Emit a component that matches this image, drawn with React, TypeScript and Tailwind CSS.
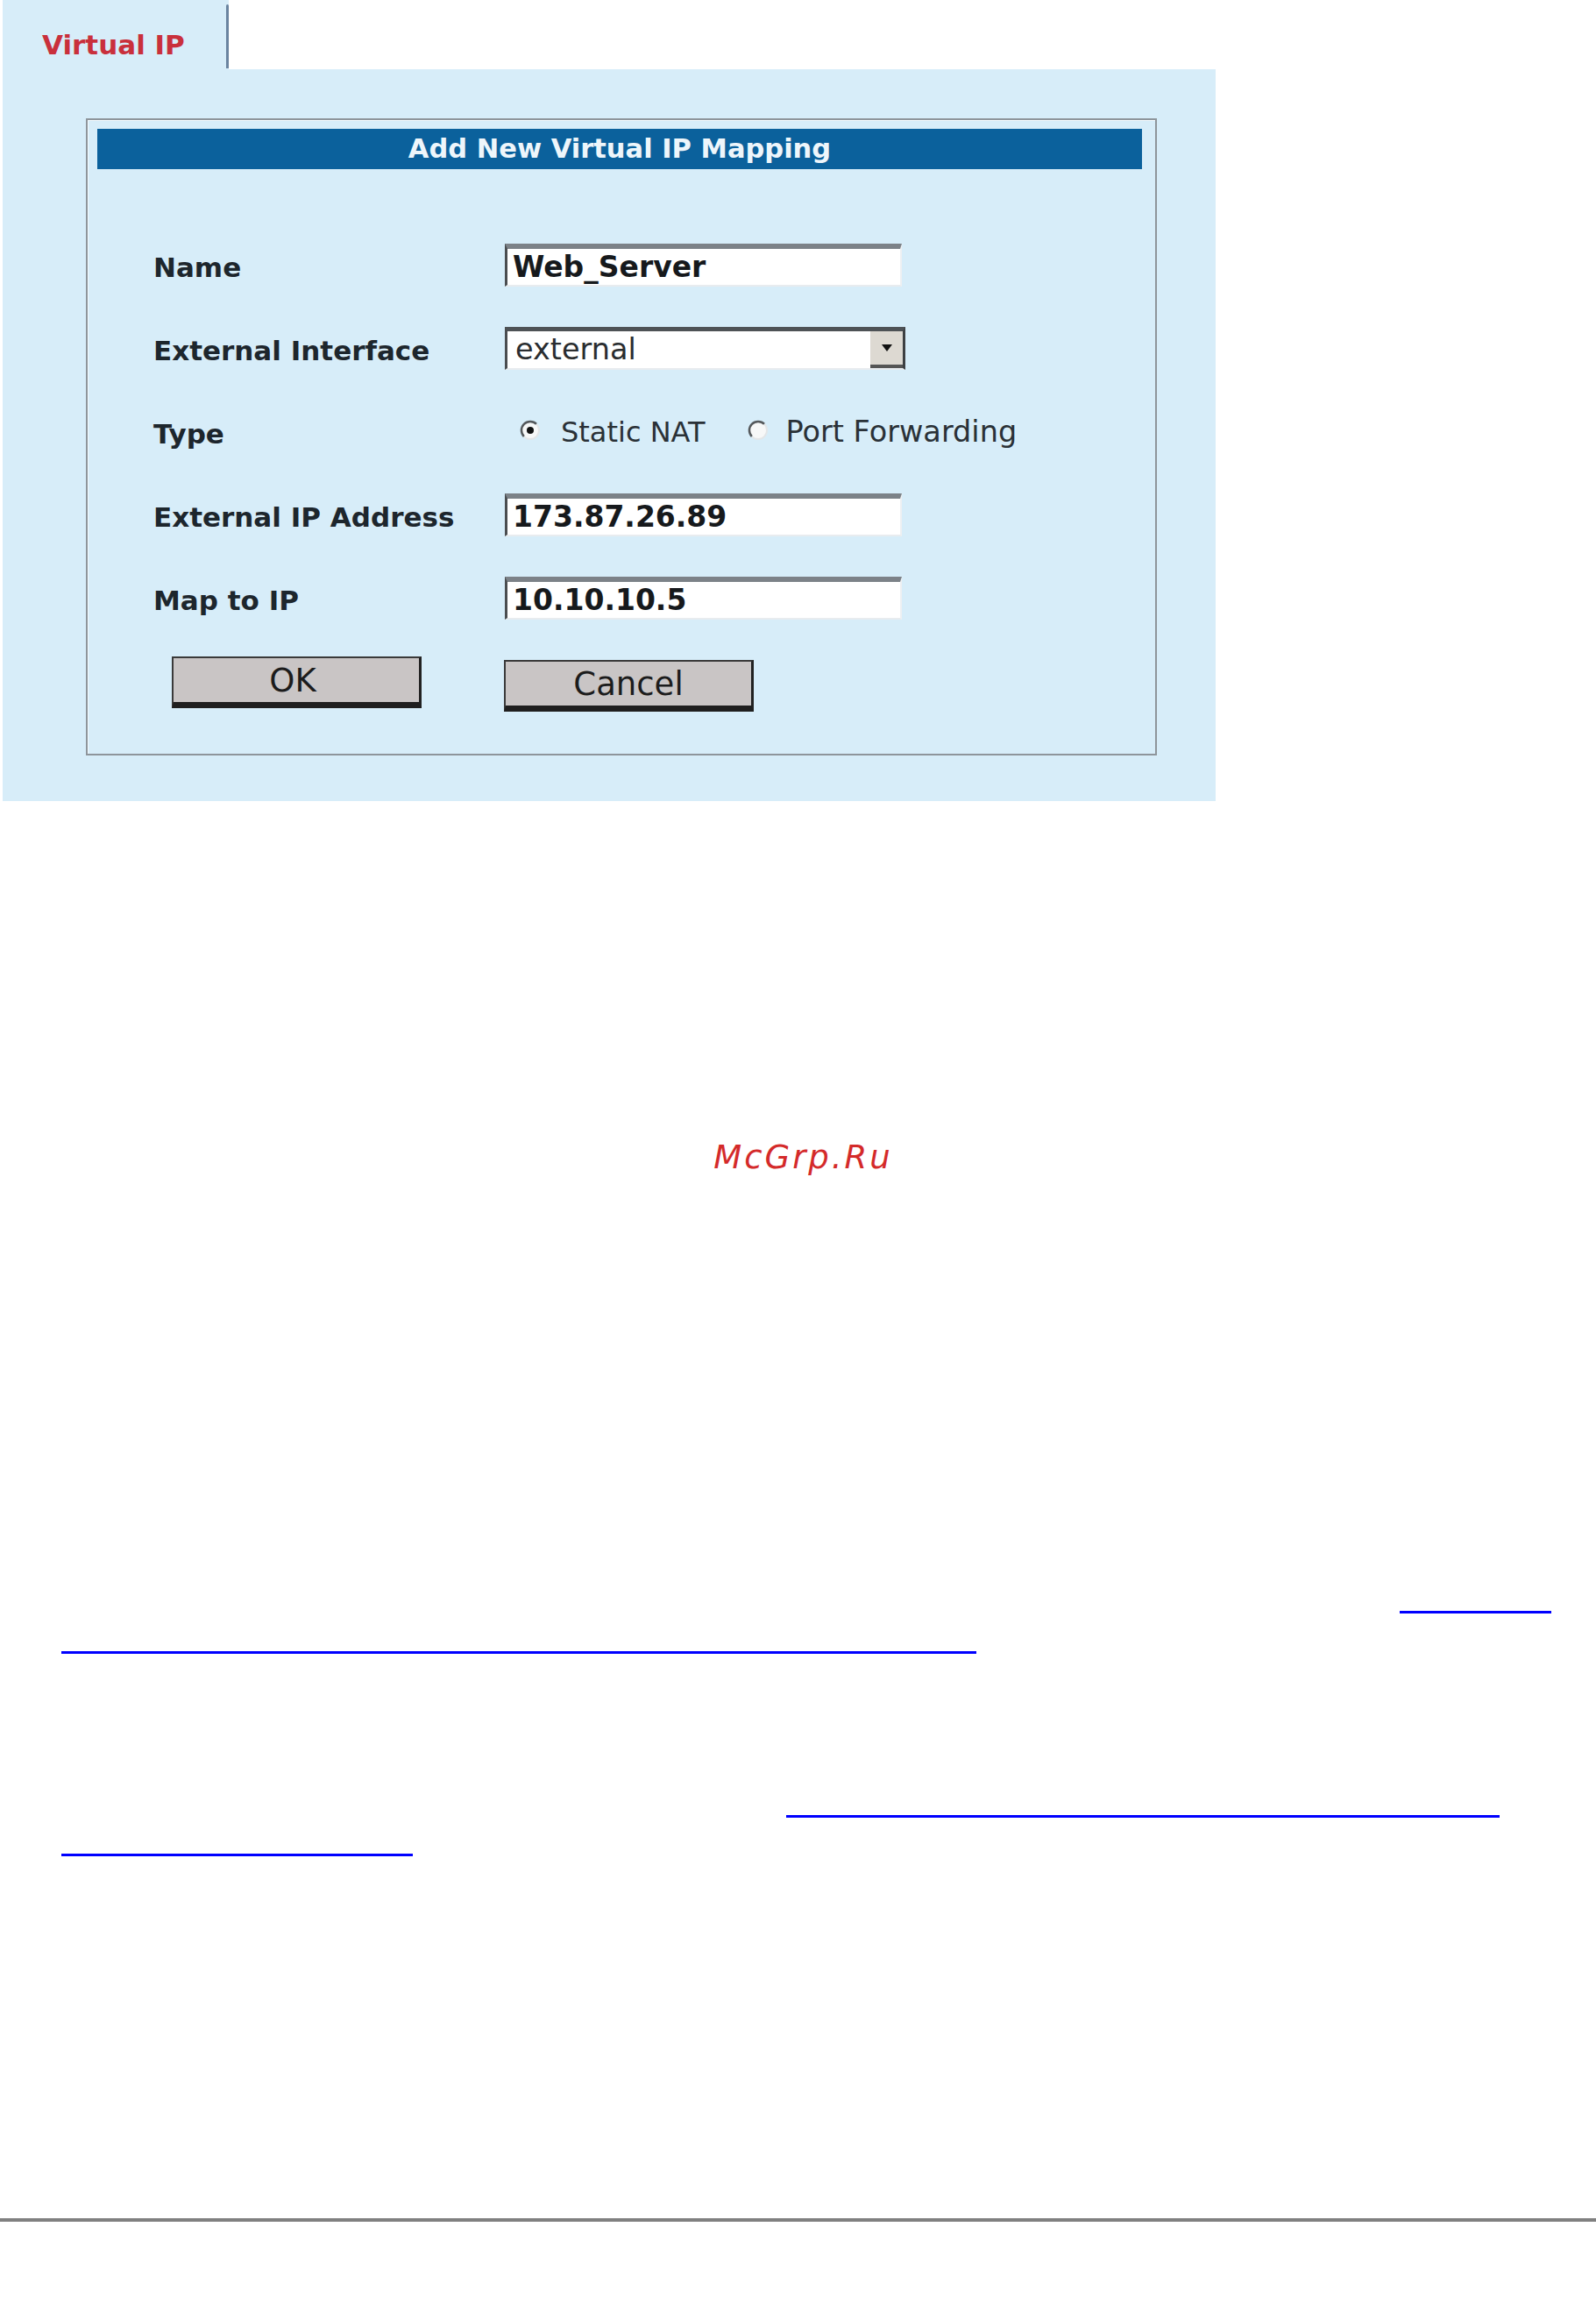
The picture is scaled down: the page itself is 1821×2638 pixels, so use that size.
import React from "react";

const bold = "font-['DejaVu_Sans',sans-serif] font-bold";
const reg = "font-['DejaVu_Sans',sans-serif]";

function TextBox({ value }: { value: string }) {
  return (
    <div className="w-[453px] h-[49px] bg-white border-t-[6px] border-t-[#7c8288] border-l-[3px] border-l-[#4a4d50] border-r-[2px] border-r-[#eef0f2] border-b-[2px] border-b-[#e8ecef] flex items-center pl-[6px]">
      <span className={`${bold} text-[33px] leading-none text-[#16191c]`}>{value}</span>
    </div>
  );
}

function Radio({ checked }: { checked: boolean }) {
  return (
    <svg width="26" height="26" viewBox="0 0 26 26" className="shrink-0">
      <circle cx="13" cy="13" r="10" fill="#f7f8f8" />
      <path d="M5.9 20.1 A10 10 0 0 1 20.1 5.9" stroke="#55595c" strokeWidth="2.5" fill="none" />
      <path d="M20.1 5.9 A10 10 0 0 1 5.9 20.1" stroke="#e3e6e8" strokeWidth="2" fill="none" />
      {checked && <circle cx="13" cy="13" r="4" fill="#111" />}
    </svg>
  );
}

function Row({ label, children }: { label: string; children: React.ReactNode }) {
  return (
    <div className="flex items-center h-[49px]">
      <div className={`w-[401px] ${bold} text-[31px] leading-none text-[#1d262d] pt-[5px]`}>{label}</div>
      {children}
    </div>
  );
}

function Button({ label, extra }: { label: string; extra: string }) {
  return (
    <div
      className={`w-[285px] h-[59px] bg-[#c9c5c5] border-t-[2px] border-l-[2px] border-t-[#3a3a3a] border-l-[#3a3a3a] border-r-[3px] border-r-[#222] border-b-[7px] border-b-[#1f1f1f] flex items-center justify-center ${extra}`}
    >
      <span className={`${reg} text-[37px] leading-none text-[#1c1c1c]`}>{label}</span>
    </div>
  );
}

export default function App() {
  return (
    <div className="w-[1821px] min-h-[2638px] bg-white">
      <div className="pl-[3px]">
        {/* Tab */}
        <div className="w-[258px] h-[79px] bg-[#d7edf9] flex">
          <div className="flex-1 flex items-start pl-[45px] pt-[36px]">
            <span className={`${bold} text-[31px] leading-none text-[#c9303c]`}>Virtual IP</span>
          </div>
          <div className="w-[3px] mt-[5px] h-[73px] bg-[#6a84a0] rounded-t-[2px]" />
        </div>

        {/* Panel */}
        <div className="w-[1384px] h-[835px] bg-[#d7edf9] pt-[56px] pl-[95px]">
          <div className="w-[1222px] h-[727px] border-2 border-[#8e959b] shadow-[inset_1px_1px_0_#f4fbff] pt-[10px] pl-[11px] pr-[15px]">
            <div className="h-[46px] bg-[#0b619c] flex items-center justify-center">
              <span className={`${bold} text-[30.5px] leading-none text-[#eef6fb]`}>Add New Virtual IP Mapping</span>
            </div>

            <div className="-ml-[11px] pl-[75px] mt-[85px] flex flex-col gap-[46px]">
              <Row label="Name">
                <TextBox value="Web_Server" />
              </Row>
              <Row label="External Interface">
                <div className="w-[457px] h-[49px] bg-white border-t-[5px] border-t-[#4e5256] border-l-[3px] border-l-[#4a4d50] border-r-[3px] border-r-[#3d4043] border-b-[2px] border-b-[#e8ecef] flex items-stretch">
                  <div className="flex-1 flex items-center pl-[9px]">
                    <span className={`${reg} text-[33.5px] leading-none text-[#2a2d30]`}>external</span>
                  </div>
                  <div className="w-[37px] bg-[#ddd9d2] border-b-[4px] border-b-[#555] flex items-center justify-center">
                    <svg width="14" height="10" viewBox="0 0 14 10">
                      <path d="M1 1 L13 1 L7 9 Z" fill="#111" />
                    </svg>
                  </div>
                </div>
              </Row>
              <Row label="Type">
                <div className="flex items-center pl-[16px] -mt-[4px]">
                  <Radio checked={true} />
                  <span className={`${reg} text-[32px] leading-none text-[#2a3137] ml-[22px] pt-[4px]`}>Static NAT</span>
                  <div className="ml-[47px]">
                    <Radio checked={false} />
                  </div>
                  <span className={`${reg} text-[33.5px] leading-none text-[#2a3137] ml-[19px] pt-[4px]`}>Port Forwarding</span>
                </div>
              </Row>
              <Row label="External IP Address">
                <TextBox value="173.87.26.89" />
              </Row>
              <Row label="Map to IP">
                <TextBox value="10.10.10.5" />
              </Row>
            </div>

            <div className="-ml-[11px] pl-[96px] mt-[42px] flex items-start">
              <Button label="OK" extra="pr-[8px]" />
              <Button label="Cancel" extra="ml-[94px] mt-[4px]" />
            </div>
          </div>
        </div>
      </div>

      {/* Watermark */}
      <div className="mt-[388px] h-[37px] text-center pl-[12px]">
        <span className="font-['DejaVu_Sans',sans-serif] italic text-[37px] leading-[37px] tracking-[3px] text-[#d42a2a]">McGrp.Ru</span>
      </div>

      {/* Link underlines */}
      <div className="mt-[499px] ml-[1597px] w-[173px] h-[3px] bg-[#0000ff]" />
      <div className="mt-[43px] ml-[70px] w-[1044px] h-[3px] bg-[#0000ff]" />
      <div className="mt-[184px] ml-[897px] w-[814px] h-[3px] bg-[#0000ff]" />
      <div className="mt-[41px] ml-[70px] w-[401px] h-[3px] bg-[#0000ff]" />

      {/* Rule */}
      <div className="mt-[413px] w-full h-[4px] bg-[#808080]" />
    </div>
  );
}
